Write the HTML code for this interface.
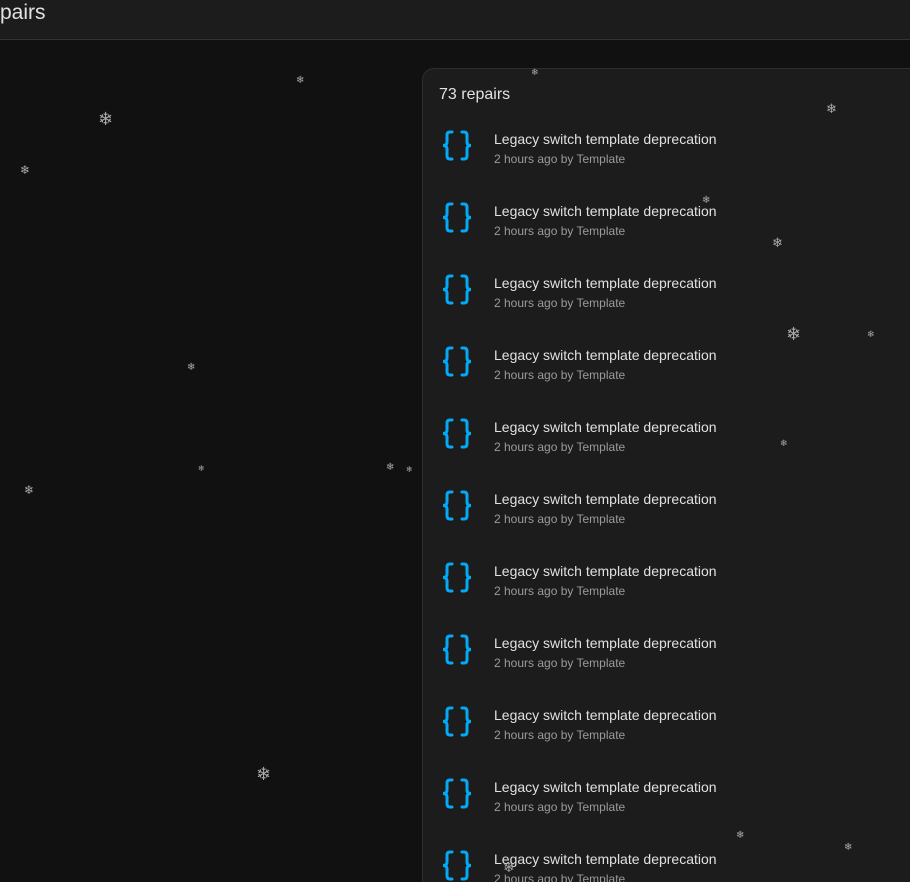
<!DOCTYPE html>
<html><head><style>
html,body{margin:0;width:910px;height:882px;overflow:hidden}
body{background:#111111;font-family:"Liberation Sans",sans-serif;position:relative}
.hdr{position:absolute;left:0;top:0;width:910px;height:39px;background:#1c1c1c;border-bottom:1px solid #333}
.hdr span{position:absolute;left:0;top:1px;font-size:21px;color:#e1e1e1}
.card{position:absolute;left:422px;top:68px;width:520px;height:830px;background:#1c1c1c;border:1px solid #2e2e2e;border-radius:12px;overflow:hidden}
.cnt{position:absolute;left:16px;top:17px;font-size:16px;color:#e1e1e1}
.item{position:absolute;left:0;width:500px;height:72px}
.ic{position:absolute;left:18px;top:-1px}
.t{position:absolute;left:72px;top:0px;font-size:14px;color:#e1e1e1}
.s{position:absolute;left:72px;top:21px;font-size:12px;color:#9b9b9b}
.f{position:absolute;color:#aaa;font-family:"DejaVu Sans",sans-serif;line-height:1}
</style></head><body>
<div class="hdr"><span>pairs</span></div>
<div class="card"><div class="cnt">73 repairs</div>
</div>
<svg width="0" height="0" style="position:absolute"><defs><g id="br" fill="none" stroke="#03a9f4" stroke-width="3" stroke-linecap="round"><path d="M12 2h-2q-3 0-3 3v7q0 3.5-4 3.5q4 0 4 3.5v7q0 3 3 3h2"/><path d="M22 2h2q3 0 3 3v7q0 3.5 4 3.5q-4 0-4 3.5v7q0 3-3 3h-2"/></g></defs></svg>
<div id="list" style="position:absolute;left:422px;top:68px;width:488px;height:814px;overflow:hidden">
<div class="item" style="top:63px"><svg class="ic" width="36" height="34"><use href="#br"/></svg><div class="t">Legacy switch template deprecation</div><div class="s">2 hours ago by Template</div></div>
<div class="item" style="top:135px"><svg class="ic" width="36" height="34"><use href="#br"/></svg><div class="t">Legacy switch template deprecation</div><div class="s">2 hours ago by Template</div></div>
<div class="item" style="top:207px"><svg class="ic" width="36" height="34"><use href="#br"/></svg><div class="t">Legacy switch template deprecation</div><div class="s">2 hours ago by Template</div></div>
<div class="item" style="top:279px"><svg class="ic" width="36" height="34"><use href="#br"/></svg><div class="t">Legacy switch template deprecation</div><div class="s">2 hours ago by Template</div></div>
<div class="item" style="top:351px"><svg class="ic" width="36" height="34"><use href="#br"/></svg><div class="t">Legacy switch template deprecation</div><div class="s">2 hours ago by Template</div></div>
<div class="item" style="top:423px"><svg class="ic" width="36" height="34"><use href="#br"/></svg><div class="t">Legacy switch template deprecation</div><div class="s">2 hours ago by Template</div></div>
<div class="item" style="top:495px"><svg class="ic" width="36" height="34"><use href="#br"/></svg><div class="t">Legacy switch template deprecation</div><div class="s">2 hours ago by Template</div></div>
<div class="item" style="top:567px"><svg class="ic" width="36" height="34"><use href="#br"/></svg><div class="t">Legacy switch template deprecation</div><div class="s">2 hours ago by Template</div></div>
<div class="item" style="top:639px"><svg class="ic" width="36" height="34"><use href="#br"/></svg><div class="t">Legacy switch template deprecation</div><div class="s">2 hours ago by Template</div></div>
<div class="item" style="top:711px"><svg class="ic" width="36" height="34"><use href="#br"/></svg><div class="t">Legacy switch template deprecation</div><div class="s">2 hours ago by Template</div></div>
<div class="item" style="top:783px"><svg class="ic" width="36" height="34"><use href="#br"/></svg><div class="t">Legacy switch template deprecation</div><div class="s">2 hours ago by Template</div></div>
</div>
<div class="f" style="left:98px;top:111px;font-size:18px">❄</div>
<div class="f" style="left:20px;top:164px;font-size:12px">❄</div>
<div class="f" style="left:296px;top:76px;font-size:10px">❄</div>
<div class="f" style="left:187px;top:363px;font-size:10px">❄</div>
<div class="f" style="left:198px;top:465px;font-size:8px">❄</div>
<div class="f" style="left:24px;top:484px;font-size:12px">❄</div>
<div class="f" style="left:386px;top:463px;font-size:10px">❄</div>
<div class="f" style="left:406px;top:466px;font-size:8px">❄</div>
<div class="f" style="left:256px;top:766px;font-size:18px">❄</div>
<div class="f" style="left:531px;top:69px;font-size:9px">❄</div>
<div class="f" style="left:826px;top:103px;font-size:13px">❄</div>
<div class="f" style="left:772px;top:237px;font-size:13px">❄</div>
<div class="f" style="left:786px;top:326px;font-size:18px">❄</div>
<div class="f" style="left:867px;top:331px;font-size:9px">❄</div>
<div class="f" style="left:780px;top:440px;font-size:9px">❄</div>
<div class="f" style="left:702px;top:196px;font-size:10px">❄</div>
<div class="f" style="left:736px;top:831px;font-size:10px">❄</div>
<div class="f" style="left:844px;top:843px;font-size:10px">❄</div>
<div class="f" style="left:503px;top:861px;font-size:14px">❄</div>
</body></html>
